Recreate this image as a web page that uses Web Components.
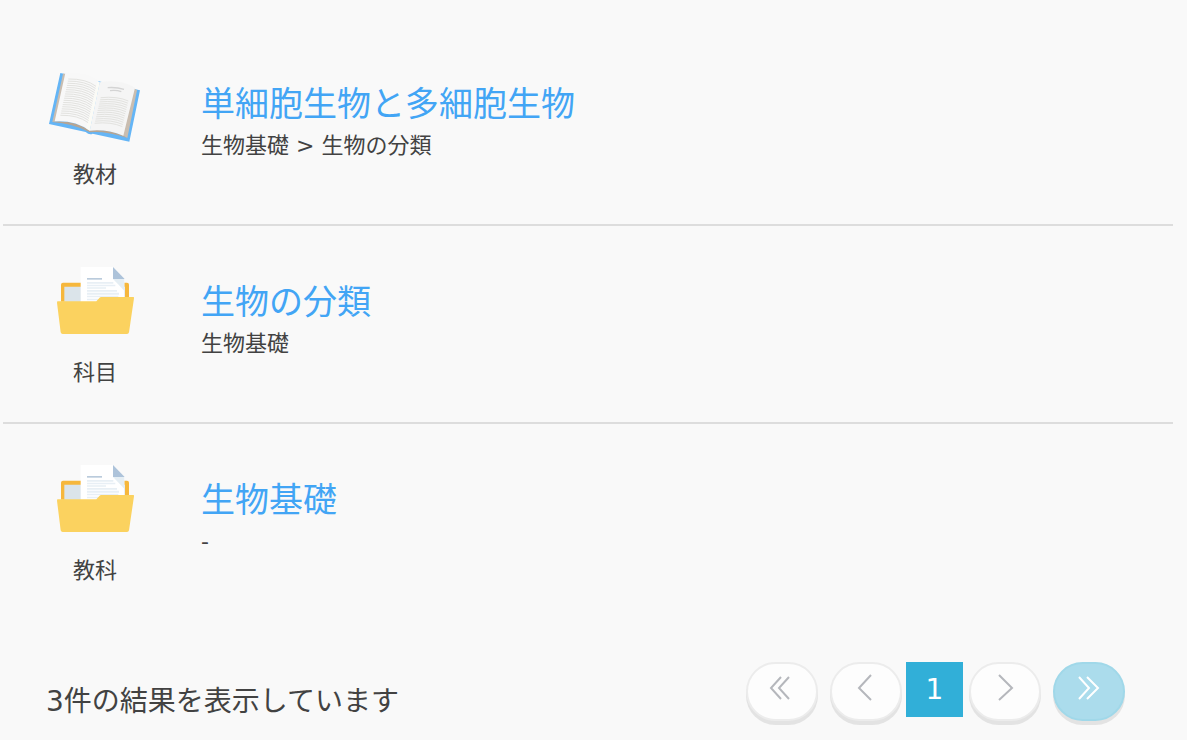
<!DOCTYPE html>
<html lang="ja">
<head>
<meta charset="utf-8">
<meta name="viewport" content="width=device-width, initial-scale=1">
<title>検索結果</title>
<style>
body { margin: 0; background: #f9f9f9; color: #424242; font-family: "DejaVu Sans", "Noto Sans CJK JP", sans-serif; }
</style>
</head>
<body>
<search-results>
  <result-item icon="book" label="教材" heading="単細胞生物と多細胞生物">生物基礎 &gt; 生物の分類</result-item>
  <result-item icon="folder" label="科目" heading="生物の分類">生物基礎</result-item>
  <result-item icon="folder" label="教科" heading="生物基礎">-</result-item>
  <span slot="count">3件の結果を表示しています</span>
  <page-nav slot="pager" current="1"></page-nav>
</search-results>

<template id="results-template">
  <style>
    :host { display: block; padding: 28px 14px 16px 3px; }
    footer { display: flex; justify-content: space-between; align-items: flex-start; flex-wrap: wrap; gap: 16px; padding: 42px 48px 0 43px; }
    .count { margin: 0; font-size: 28px; line-height: 40px; padding-top: 20px; }
  </style>
  <main><slot></slot></main>
  <footer><p class="count"><slot name="count"></slot></p><slot name="pager"></slot></footer>
</template>

<template id="item-template">
  <style>
    :host { display: block; border-bottom: 2px solid #ddd; }
    :host(:last-of-type) { border-bottom: 0; }
    article { display: flex; gap: 51px; padding: 29px 37px 33px; }
    .kind { display: flex; flex-direction: column; align-items: center; gap: 12px; flex: none; font-size: 22px; line-height: 32px; }
    svg { display: block; width: 110px; height: 90px; }
    .text { padding-top: 25px; min-width: 0; }
    h2 { margin: 0; font-size: 34px; line-height: 44px; font-weight: inherit; }
    a { color: #42a5f5; text-decoration: none; }
    a:hover { text-decoration: underline; }
    p { margin: 0; font-size: 22px; line-height: 40px; }
  </style>
  <article>
    <div class="kind"><span class="icon"></span><span class="label"></span></div>
    <div class="text"><h2><a href="#"></a></h2><p><slot></slot></p></div>
  </article>
</template>

<template id="nav-template">
  <style>
    :host { display: block; }
    nav { display: flex; align-items: flex-start; gap: 12px; }
    button { box-sizing: border-box; width: 72px; height: 59px; padding: 0; border: 2px solid #ececec; border-radius: 30px; background: #fdfdfd; box-shadow: 0 4px #e3e3e3; color: #b5b7bc; cursor: pointer; }
    .last { background: #abdcec; border-color: #a0d8e9; color: #fff; }
    svg { display: block; width: 68px; height: 55px; fill: none; stroke: currentColor; stroke-width: 2; }
    .current { width: 57px; margin: 0 -6px 0 -8px; background: #31afd8; color: #fff; font-size: 28px; line-height: 55px; height: 55px; text-align: center; }
  </style>
  <nav aria-label="ページ">
    <button type="button" aria-label="最初"><svg viewBox="2 2 68 55"><path d="M35 15 25 26 35 37M43 15 33 26 43 37"/></svg></button>
    <button type="button" aria-label="前"><svg viewBox="2 2 68 55"><path d="M41 13 29 26 41 38"/></svg></button>
    <span class="current" aria-current="page"></span>
    <button type="button" aria-label="次"><svg viewBox="2 2 68 55"><path d="M30 13 43 26 30 38"/></svg></button>
    <button type="button" class="last" aria-label="最後"><svg viewBox="2 2 68 55"><path d="M26 15 36 26 26 37M34 15 45 26 34 37"/></svg></button>
  </nav>
</template>

<script>
// Parallel text lines of an open page, following its curve.
const lines = (n, make) => Array.from({ length: n }, (_, i) => make(i)).join("");

const ICONS = {
  book: `<svg viewBox="0 0 330 270" aria-hidden="true"><g transform="translate(0 9)">
    <path fill="#64b5f6" d="M61 39 L300 91 L268 245 L158 221 Q148 226 137 216 L27 192Z"/>
    <path fill="#c9bdb0" d="M69 41 L80 41 L60 184 L37 186ZM280 84 L291 91 L262 234 L245 226Z"/>
    <path fill="#b5a594" d="M37 186 Q100 178 149 211 Q210 204 262 234 Q196 213 150 217 Q98 190 37 186Z"/>
    <path fill="#f8f8f8" d="M76 39 Q142 33 179 67 L149 212 Q105 180 44 184Z"/>
    <path fill="#f5f5f5" d="M179 67 Q238 56 285 83 L250 227 Q198 206 149 212Z"/>
    <path fill="#fbfbf6" d="M172 66 L179 67 L149 212 L139 205Z"/>
    <g fill="none" stroke="#e2e2df" stroke-width="3">${lines(18, i => {
      const x = 85 - i * 1.4, y = 57 + i * 6.4;
      return `<path d="M${x} ${y}Q${x + 53} ${y - 1} ${x + 83} ${y + 22}"/>`;
    })}${lines(13, i => {
      const x = 182 - i * 1.5, y = 113 + i * 6.4;
      return `<path d="M${x} ${y}Q${x + 50} ${y - 5} ${x + 83} ${y + 10}"/>`;
    })}</g>
    <path fill="none" stroke="#d4d4d4" stroke-width="4" d="M203 83Q230 81 252 88M210 92Q228 89 244 95"/>
  </g></svg>`,
  folder: `<svg viewBox="0 0 330 270" aria-hidden="true"><g transform="translate(15 0)">
    <path fill="#f6b73c" d="M54 83H246Q252 83 252 89V140H48V89Q48 83 54 83Z"/>
    <path fill="#dbe4ea" d="M58 95H240V145H58Z"/>
    <path fill="#fff" d="M107 36H204L238 72V145H107Z"/>
    <path fill="#e5eef4" d="M204 72H238V107Z"/>
    <path fill="#adc3da" d="M204 36L239 72H204Z"/>
    <path fill="#bacbdc" d="M126 69H171V74H126Z"/>
    <path fill="#e8eff5" d="M126 81H205V86H126ZM126 89H211V94H126ZM126 97H183V101H126ZM126 105H216V110H126ZM126 113H222V119H126ZM126 122H220V127H126ZM126 131H160V136H126Z"/>
    <path fill="#fbd25f" d="M37 139H154L163 129Q165 126 169 126H265Q268 126 267 130L252 232Q251 237 246 237H53Q48 237 47 232L36 143Z"/>
  </g></svg>`
};

class TemplateElement extends HTMLElement {
  constructor() {
    super();
    const source = document.getElementById(this.constructor.template);
    this.attachShadow({ mode: "open" }).append(source.content.cloneNode(true));
  }
}

class SearchResults extends TemplateElement {
  static template = "results-template";
}

class ResultItem extends TemplateElement {
  static template = "item-template";
  connectedCallback() {
    const root = this.shadowRoot;
    root.querySelector(".icon").innerHTML = ICONS[this.getAttribute("icon")];
    root.querySelector(".label").textContent = this.getAttribute("label");
    root.querySelector("a").textContent = this.getAttribute("heading");
  }
}

class PageNav extends TemplateElement {
  static template = "nav-template";
  connectedCallback() {
    this.shadowRoot.querySelector(".current").textContent = this.getAttribute("current");
  }
}

customElements.define("search-results", SearchResults);
customElements.define("result-item", ResultItem);
customElements.define("page-nav", PageNav);
</script>
</body>
</html>
